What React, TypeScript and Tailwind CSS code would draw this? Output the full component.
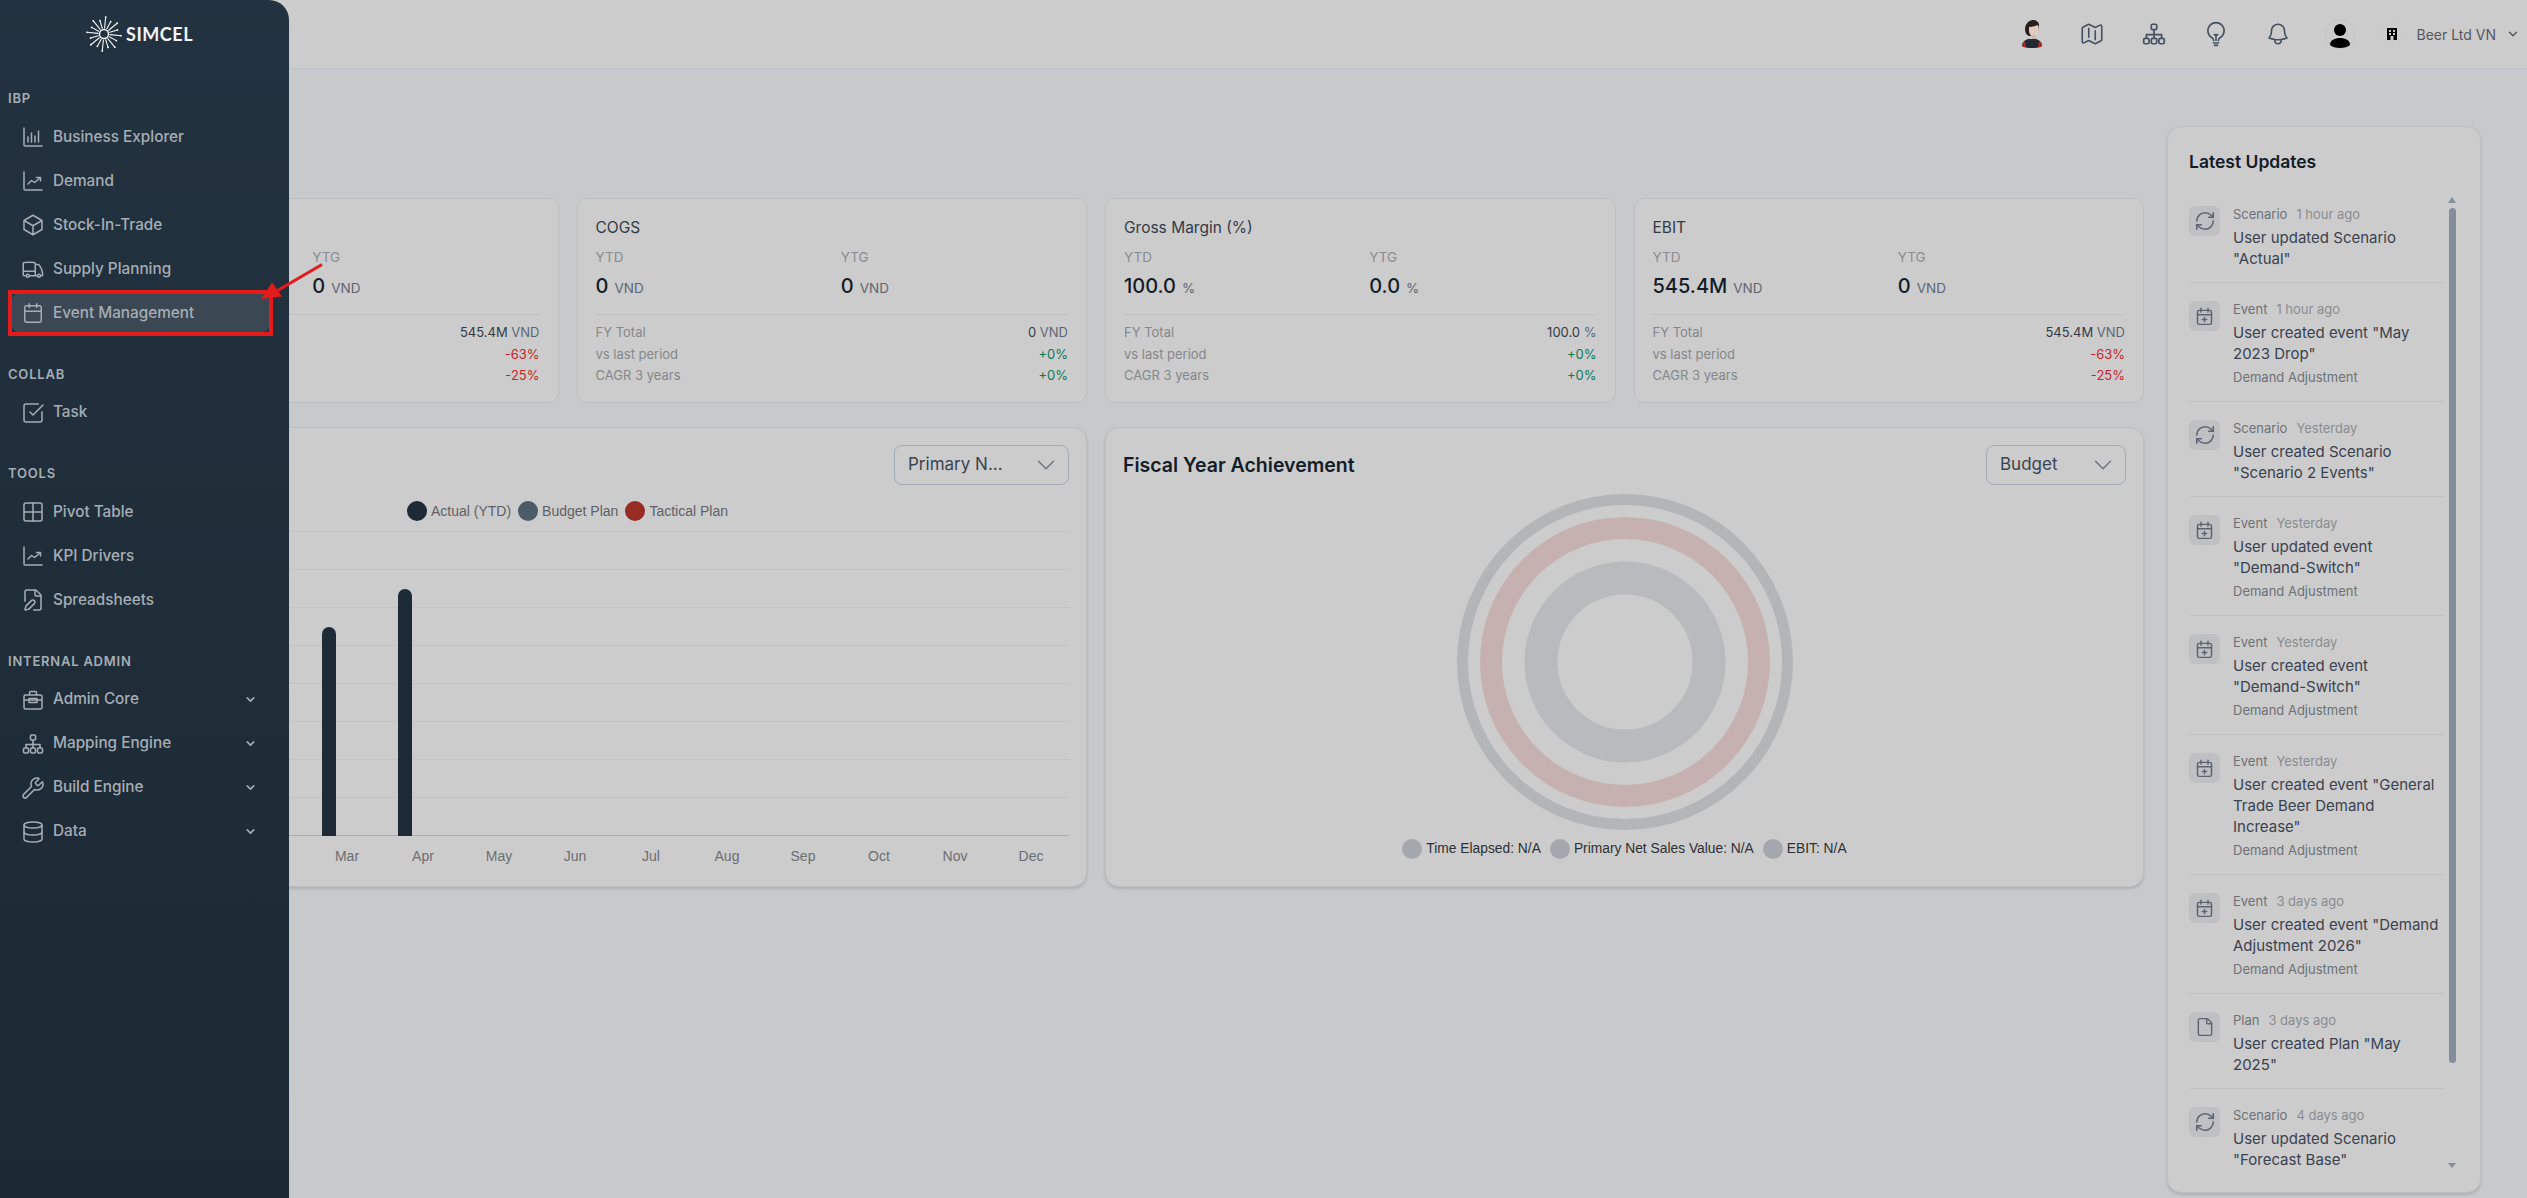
import type { ReactNode } from "react";
import {
  Calendar,
  ChevronDown,
  Database,
  File,
  FilePen,
  Grid2x2,
  RefreshCw,
  SquareCheckBig,
  Wrench,
} from "lucide-react";
import { HiOutlineBell, HiOutlineCube, HiOutlineLightBulb, HiOutlineMap, HiOutlineTruck } from "react-icons/hi2";

function BarsIcon() {
  return (
    <svg width="24" height="24" viewBox="0 0 24 24" fill="none" stroke="currentColor" strokeWidth="1.5" strokeLinecap="round">
      <path d="M3 3v17a1 1 0 0 0 1 1h17" />
      <path d="M7 17v-5M10.5 17V8M14 17v-6M17.5 17V6" />
    </svg>
  );
}

function TrendIcon() {
  return (
    <svg width="24" height="24" viewBox="0 0 24 24" fill="none" stroke="currentColor" strokeWidth="1.5" strokeLinecap="round" strokeLinejoin="round">
      <path d="M3 3v17a1 1 0 0 0 1 1h17" />
      <path d="M7 15l3.5-3.5 3 2L19 9" />
      <path d="M15.5 8.5H19.5V12" />
    </svg>
  );
}

function ToolboxIcon() {
  return (
    <svg width="24" height="24" viewBox="0 0 24 24" fill="none" stroke="currentColor" strokeWidth="1.5" strokeLinejoin="round">
      <rect x="3" y="7" width="18" height="14" rx="1.5" />
      <path d="M8.5 7V4.5a1 1 0 0 1 1-1h5a1 1 0 0 1 1 1V7" />
      <path d="M3 12h18" />
      <rect x="8" y="10.500" width="8" height="4" />
    </svg>
  );
}

function OrgIcon({ size = 24 }: { size?: number }) {
  return (
    <svg width={size} height={size} viewBox="0 0 24 24" fill="none" stroke="currentColor" strokeWidth="1.6" strokeLinejoin="round">
      <rect x="9.500" y="3" width="5" height="5" rx="1" />
      <rect x="2.500" y="16" width="5" height="5" rx="1.400" />
      <rect x="9.500" y="16" width="5" height="5" rx="1.400" />
      <rect x="16.500" y="16" width="5" height="5" rx="1.400" />
      <path d="M12 8v8M5 16v-3.500h14V16" />
    </svg>
  );
}

function CalendarAdd() {
  return (
    <svg width="21" height="21" viewBox="0 0 24 24" fill="none" stroke="currentColor" strokeWidth="1.7" strokeLinecap="round" strokeLinejoin="round">
      <rect x="4" y="5" width="16" height="16" rx="2" />
      <path d="M8 2.500V7M16 2.500V7M4 10h16" />
      <path d="M12 13v5M9.500 15.500h5" />
    </svg>
  );
}

type NavItem = { label: string; icon: ReactNode; active?: boolean; more?: boolean };

const sections: { title: string; items: NavItem[] }[] = [
  {
    title: "IBP",
    items: [
      { label: "Business Explorer", icon: <BarsIcon /> },
      { label: "Demand", icon: <TrendIcon /> },
      { label: "Stock-In-Trade", icon: <HiOutlineCube size={24} /> },
      { label: "Supply Planning", icon: <HiOutlineTruck size={24} /> },
      { label: "Event Management", icon: <Calendar size={22} strokeWidth={1.6} />, active: true },
    ],
  },
  { title: "COLLAB", items: [{ label: "Task", icon: <SquareCheckBig size={24} strokeWidth={1.5} /> }] },
  {
    title: "TOOLS",
    items: [
      { label: "Pivot Table", icon: <Grid2x2 size={24} strokeWidth={1.5} /> },
      { label: "KPI Drivers", icon: <TrendIcon /> },
      { label: "Spreadsheets", icon: <FilePen size={24} strokeWidth={1.5} /> },
    ],
  },
  {
    title: "INTERNAL ADMIN",
    items: [
      { label: "Admin Core", icon: <ToolboxIcon />, more: true },
      { label: "Mapping Engine", icon: <OrgIcon />, more: true },
      { label: "Build Engine", icon: <Wrench size={24} strokeWidth={1.5} />, more: true },
      { label: "Data", icon: <Database size={24} strokeWidth={1.5} />, more: true },
    ],
  },
];

// the first card sits mostly under the open sidebar, only its right half shows
const kpis = [
  { title: "", ytd: "", ytg: "0", unit: "VND", total: "545.4M", vs: "-63%", cagr: "-25%", covered: true },
  { title: "COGS", ytd: "0", ytg: "0", unit: "VND", total: "0", vs: "+0%", cagr: "+0%" },
  { title: "Gross Margin (%)", ytd: "100.0", ytg: "0.0", unit: "%", total: "100.0", vs: "+0%", cagr: "+0%" },
  { title: "EBIT", ytd: "545.4M", ytg: "0", unit: "VND", total: "545.4M", vs: "-63%", cagr: "-25%" },
];

const months = [
  { m: "Jan", h: 0 },
  { m: "Feb", h: 0 },
  { m: "Mar", h: 209 },
  { m: "Apr", h: 247 },
  { m: "May", h: 0 },
  { m: "Jun", h: 0 },
  { m: "Jul", h: 0 },
  { m: "Aug", h: 0 },
  { m: "Sep", h: 0 },
  { m: "Oct", h: 0 },
  { m: "Nov", h: 0 },
  { m: "Dec", h: 0 },
];

type Update = { kind: "Scenario" | "Event" | "Plan"; when: string; text: string; sub?: string };

const updates: Update[] = [
  { kind: "Scenario", when: "1 hour ago", text: 'User updated Scenario "Actual"' },
  { kind: "Event", when: "1 hour ago", text: 'User created event "May 2023 Drop"', sub: "Demand Adjustment" },
  { kind: "Scenario", when: "Yesterday", text: 'User created Scenario "Scenario 2 Events"' },
  { kind: "Event", when: "Yesterday", text: 'User updated event "Demand-Switch"', sub: "Demand Adjustment" },
  { kind: "Event", when: "Yesterday", text: 'User created event "Demand-Switch"', sub: "Demand Adjustment" },
  { kind: "Event", when: "Yesterday", text: 'User created event "General Trade Beer Demand Increase"', sub: "Demand Adjustment" },
  { kind: "Event", when: "3 days ago", text: 'User created event "Demand Adjustment 2026"', sub: "Demand Adjustment" },
  { kind: "Plan", when: "3 days ago", text: 'User created Plan "May 2025"' },
  { kind: "Scenario", when: "4 days ago", text: 'User updated Scenario "Forecast Base"' },
];

function Logo() {
  const rays = Array.from({ length: 16 }, (_, i) => (i * Math.PI) / 8 + 0.1);
  return (
    <svg width="38" height="38" viewBox="-19 -19 38 38" fill="none" stroke="#f3f4f5" strokeWidth="1.1" strokeLinecap="round">
      <circle r="4.500" strokeWidth="1.400" />
      {rays.map((a, i) => {
        const r = i % 2 ? 14 : 17;
        return (
          <g key={i}>
            <line x1={Math.cos(a) * 6} y1={Math.sin(a) * 6} x2={Math.cos(a) * r} y2={Math.sin(a) * r} />
            <circle cx={Math.cos(a) * r} cy={Math.sin(a) * r} r="0.900" fill="#f3f4f5" stroke="none" />
          </g>
        );
      })}
    </svg>
  );
}

function Avatar() {
  return (
    <svg width="22" height="28" viewBox="0 0 22 28">
      <path d="M1 26c0-4 3-6 6-7h8c3 1 6 3 6 7-3 2-7 2-10 2s-7 0-10-2z" fill="#1f2a33" />
      <path d="M1 26c0-2 1-4 3-5l1 6c-2 0-3 0-4-1zM21 26c0-2-1-4-3-5l-1 6c2 0 3 0 4-1z" fill="#a82a20" />
      <path d="M4 9c0-5 4-9 8-9 3 0 6 2 6 5l-1 8-3 3H8C5 15 4 12 4 9z" fill="#2a1e1c" />
      <path d="M8 7c3 0 6-1 9-2 1 3 1 7 0 9-1 2-2 3-4 3-2 0-5-3-5-6z" fill="#dfcac2" />
      <rect x="11" y="15" width="4" height="4" fill="#cfb7ae" />
    </svg>
  );
}

function UserAvatar() {
  return (
    <svg width="30" height="30" viewBox="0 0 30 30">
      <circle cx="15" cy="15" r="14.500" fill="none" stroke="#b9babc" strokeWidth="0.500" />
      <circle cx="15" cy="11" r="6" fill="#000" />
      <path d="M5 26c0-5 5-7 10-7s10 2 10 7c-2 2-6 3-10 3s-8-1-10-3z" fill="#000" />
    </svg>
  );
}

function Building() {
  return (
    <svg width="22" height="24" viewBox="0 0 22 24">
      <circle cx="11" cy="12" r="10.500" fill="none" stroke="#bdbec0" strokeWidth="0.500" strokeDasharray="3 4" />
      <path d="M6 6h10v12h-3.500v-4h-3v4H6z" fill="#000" />
      <rect x="8" y="8" width="2" height="2" fill="#ccc" />
      <rect x="12" y="8" width="2" height="2" fill="#ccc" />
      <rect x="8" y="11" width="2" height="2" fill="#ccc" />
      <rect x="12" y="11" width="2" height="2" fill="#ccc" />
    </svg>
  );
}

function Topbar() {
  return (
    <header className="flex h-[69px] items-center justify-end border-b border-[#bcc1ca] bg-[#cccccc] pr-[7px] text-[#465263]">
      <div className="flex items-center gap-[36px]">
        <Avatar />
        <HiOutlineMap size={26} />
        <OrgIcon size={26} />
        <HiOutlineLightBulb size={26} />
        <HiOutlineBell size={26} />
      </div>
      <div className="ml-[34px] flex items-center">
        <UserAvatar />
        <div className="ml-[26px]">
          <Building />
        </div>
        <span className="ml-[14px] text-[14px] text-[#55585e]">Beer Ltd VN</span>
        <ChevronDown size={14} strokeWidth={2.5} className="ml-[10px] text-[#55585e]" />
      </div>
    </header>
  );
}

function KpiCard({ kpi }: { kpi: (typeof kpis)[number] }) {
  const bad = kpi.vs.startsWith("-");
  const covered = "covered" in kpi;
  return (
    <div className="h-[205px] rounded-[10px] border border-[#bdbec1] bg-[#cccccc] px-[18px] pt-[19px]">
      <div className="h-5 text-[15.500px] leading-5 text-[#333b47]">{kpi.title}</div>
      <div className="mt-[9px] grid grid-cols-2 gap-x-[18px]">
        <div className="h-[53px]">
          {!covered && (
            <>
              <div className="text-[13.500px] leading-5 text-[#8a8c90]">YTD</div>
              <div className="mt-[5px] h-7 leading-7">
                <span className="text-[20px] font-medium text-[#141c28]">{kpi.ytd}</span>
                <span className="ml-[6px] text-[13.500px] text-[#5e6672]">{kpi.unit}</span>
              </div>
            </>
          )}
        </div>
        <div className="h-[53px]">
          <div className="text-[13.500px] leading-5 text-[#8a8c90]">YTG</div>
          <div className="mt-[5px] h-7 leading-7">
            <span className="text-[20px] font-medium text-[#141c28]">{kpi.ytg}</span>
            <span className="ml-[6px] text-[13.500px] text-[#5e6672]">{kpi.unit}</span>
          </div>
        </div>
      </div>
      <div className="mt-[14px] border-t border-[#bfc0c2] pt-[7px] text-[13px] leading-[21.5px]">
        <div className="flex justify-between">
          <span className="text-[#85878b]">{!covered && "FY Total"}</span>
          <span className="text-[#333b47]">
            {kpi.total} <span className="text-[#5e6672]">{kpi.unit}</span>
          </span>
        </div>
        <div className="flex justify-between">
          <span className="text-[#85878b]">{!covered && "vs last period"}</span>
          <span className={bad ? "text-[#c9242c]" : "text-[#0f7a58]"}>{kpi.vs}</span>
        </div>
        <div className="flex justify-between">
          <span className="text-[#85878b]">{!covered && "CAGR 3 years"}</span>
          <span className={bad ? "text-[#c9242c]" : "text-[#0f7a58]"}>{kpi.cagr}</span>
        </div>
      </div>
    </div>
  );
}

function Select({ label, width }: { label: string; width: string }) {
  return (
    <div className={`flex h-10 items-center justify-between rounded-lg border border-[#a3aab5] pl-[13px] pr-[7px] text-[17px] text-[#3a4452] ${width}`}>
      <span>{label}</span>
      <ChevronDown size={30} strokeWidth={1.2} className="text-[#6b7684]" />
    </div>
  );
}

function LegendDot({ color, label }: { color: string; label: string }) {
  return (
    <span className="flex items-center gap-[4px]">
      <span className={`h-5 w-5 rounded-full ${color}`} />
      <span>{label}</span>
    </span>
  );
}

function SalesChart() {
  return (
    <div className="h-[460px] rounded-[14px] border border-[#bdbec1] bg-[#cccccc] px-[17px] pt-[17px] shadow-[0_2px_3px_rgba(0,0,0,0.12)]">
      <div className="flex justify-end">
        <Select label="Primary N..." width="w-[175px]" />
      </div>
      <div className="mt-[16px] flex h-5 justify-center gap-[7px] font-['Liberation_Sans',Arial,sans-serif] text-[14px] text-[#5f6165]">
        <LegendDot color="bg-[#1e2a35]" label="Actual (YTD)" />
        <LegendDot color="bg-[#4d5a68]" label="Budget Plan" />
        <LegendDot color="bg-[#992b25]" label="Tactical Plan" />
      </div>
      <div className="relative mt-[10px] ml-[91px] h-[305px]">
        <div className="flex h-full flex-col justify-between">
          {Array.from({ length: 8 }, (_, i) => (
            <div key={i} className="border-t border-[#c2c3c4]" />
          ))}
          <div className="border-t border-[#a9abaf]" />
        </div>
        <div className="absolute inset-0 grid grid-cols-12">
          {months.map(({ m, h }) => (
            <div key={m} className="flex items-end justify-center pr-[36px]">
              {h > 0 && <div className="w-[14px] rounded-t-full bg-[#1e2a35]" style={{ height: h }} />}
            </div>
          ))}
        </div>
      </div>
      <div className="ml-[91px] mt-[12px] grid grid-cols-12 text-center font-['Liberation_Sans',Arial,sans-serif] text-[14px] leading-4 text-[#6b6e73]">
        {months.map(({ m }) => (
          <span key={m}>{m}</span>
        ))}
      </div>
    </div>
  );
}

function AchievementChart() {
  return (
    <div className="flex h-[460px] flex-col rounded-[14px] border border-[#bdbec1] bg-[#cccccc] px-[17px] pt-[17px] shadow-[0_2px_3px_rgba(0,0,0,0.12)]">
      <div className="flex items-start justify-between">
        <div className="text-[19.500px] font-semibold leading-10 text-[#141c28]">Fiscal Year Achievement</div>
        <Select label="Budget" width="w-[140px]" />
      </div>
      <div className="mt-[9px] flex justify-center">
        <svg width="336" height="336" viewBox="0 0 336 336" fill="none">
          <circle cx="168" cy="168" r="162.500" stroke="#b4b5b7" strokeWidth="11" />
          <circle cx="168" cy="168" r="134" stroke="#c5b2b0" strokeWidth="22" />
          <circle cx="168" cy="168" r="84" stroke="#b9babd" strokeWidth="33" />
        </svg>
      </div>
      <div className="mt-[9px] flex h-5 justify-center gap-[9px] font-['Liberation_Sans',Arial,sans-serif] text-[13.800px] text-[#2e3033]">
        <LegendDot color="bg-[#a4a8ae]" label="Time Elapsed: N/A" />
        <LegendDot color="bg-[#a4a8ae]" label="Primary Net Sales Value: N/A" />
        <LegendDot color="bg-[#a4a8ae]" label="EBIT: N/A" />
      </div>
    </div>
  );
}

function UpdateIcon({ kind }: { kind: Update["kind"] }) {
  return (
    <div className="flex h-[30px] w-[31px] shrink-0 items-center justify-center rounded-md bg-[#bfc0c3] text-[#5d6470]">
      {kind === "Scenario" && <RefreshCw size={22} strokeWidth={1.7} />}
      {kind === "Event" && <CalendarAdd />}
      {kind === "Plan" && <File size={20} strokeWidth={1.7} />}
    </div>
  );
}

function LatestUpdates() {
  return (
    <aside className="flex h-[1067px] flex-col rounded-[14px] border border-[#bdbec1] bg-[#cccccc] pl-[21px] pr-[24px] pt-[23px] shadow-[0_2px_3px_rgba(0,0,0,0.12)]">
      <h2 className="text-[17.500px] font-semibold leading-6 text-[#141c28]">Latest Updates</h2>
      <div className="mt-[14px] flex h-[984px] gap-[3px]">
        <div className="min-w-0 flex-1 overflow-hidden">
          {updates.map((u, i) => (
            <div key={i} className="flex gap-[13px] border-b border-[#c0c1c3] pb-[13px] pt-[18px] last:border-b-0">
              <UpdateIcon kind={u.kind} />
              <div className="min-w-0 flex-1">
                <div className="text-[13px] leading-4 text-[#6e7175]">
                  {u.kind}
                  <span className="ml-[9px] text-[#8a8c90]">{u.when}</span>
                </div>
                <div className="mt-[5px] text-[15px] leading-[21px] text-[#3a4250]">{u.text}</div>
                {u.sub && <div className="mb-[2px] mt-[4px] text-[13px] leading-[18px] text-[#6e7175]">{u.sub}</div>}
              </div>
            </div>
          ))}
        </div>
        <div className="flex w-[8px] flex-col items-center">
          <div className="mt-[9px] h-0 w-0 border-x-[4px] border-b-[6px] border-x-transparent border-b-[#838d9c]" />
          <div className="mt-[5px] h-[855px] w-[7px] rounded-full bg-[#838d9c]" />
          <div className="mt-[100px] h-0 w-0 border-x-[4px] border-t-[5px] border-x-transparent border-t-[#838d9c]" />
        </div>
      </div>
    </aside>
  );
}

function Sidebar() {
  return (
    <nav className="absolute left-0 top-0 h-full w-[289px] rounded-tr-[20px] bg-gradient-to-b from-[#233240] to-[#1c2933] text-[#a6adb4]">
      <div className="flex h-[86px] items-start gap-[3px] pl-[85px] pt-[15px]">
        <Logo />
        <span className="mt-[7px] font-['Lato',sans-serif] text-[18px] font-bold leading-6 tracking-[0.03em] text-[#f3f4f5]">SIMCEL</span>
      </div>
      {sections.map((section) => (
        <section key={section.title} className="mb-[26.500px]">
          <div className="h-6 pl-2 text-[13px] font-semibold leading-6 tracking-[0.06em]">{section.title}</div>
          <ul className="mt-[5px]">
            {section.items.map((item) => (
              <li key={item.label} className="flex h-11 items-center pl-3 pr-5">
                <div className={`flex h-[38px] w-full items-center gap-[8px] rounded-md pl-[9px] pr-[12px] ${item.active ? "bg-[#3b4752]" : ""}`}>
                  <span className="flex w-6 shrink-0 justify-center">{item.icon}</span>
                  <span className="flex-1 text-[15.300px] font-medium">{item.label}</span>
                  {item.more && <ChevronDown size={13} strokeWidth={3} />}
                </div>
              </li>
            ))}
          </ul>
        </section>
      ))}
    </nav>
  );
}

export default function App() {
  return (
    <div className="relative h-screen overflow-hidden bg-[#c8c9cb] font-['Inter',sans-serif]">
      <Topbar />
      <main className="grid grid-cols-[1fr_314px] gap-[23px] pl-12 pr-[46px] pt-[57px]">
        <div className="min-w-0 pt-[72px]">
          <div className="grid grid-cols-4 gap-[18px]">
            {kpis.map((kpi, i) => (
              <KpiCard key={i} kpi={kpi} />
            ))}
          </div>
          <div className="mt-6 grid grid-cols-2 gap-[18px]">
            <SalesChart />
            <AchievementChart />
          </div>
        </div>
        <LatestUpdates />
      </main>
      <Sidebar />
      {/* annotation drawn over the page */}
      <div className="absolute left-2 top-[290px] h-[46px] w-[265px] border-[4px] border-[#e31b1b]" />
      <svg className="pointer-events-none absolute left-[255px] top-[258px]" width="75" height="48" viewBox="0 0 75 48">
        <path d="M67 6.500L20 34" stroke="#e31b1b" strokeWidth="3" />
        <path d="M6 41L17 24.500L27 38.500z" fill="#e31b1b" />
      </svg>
    </div>
  );
}
